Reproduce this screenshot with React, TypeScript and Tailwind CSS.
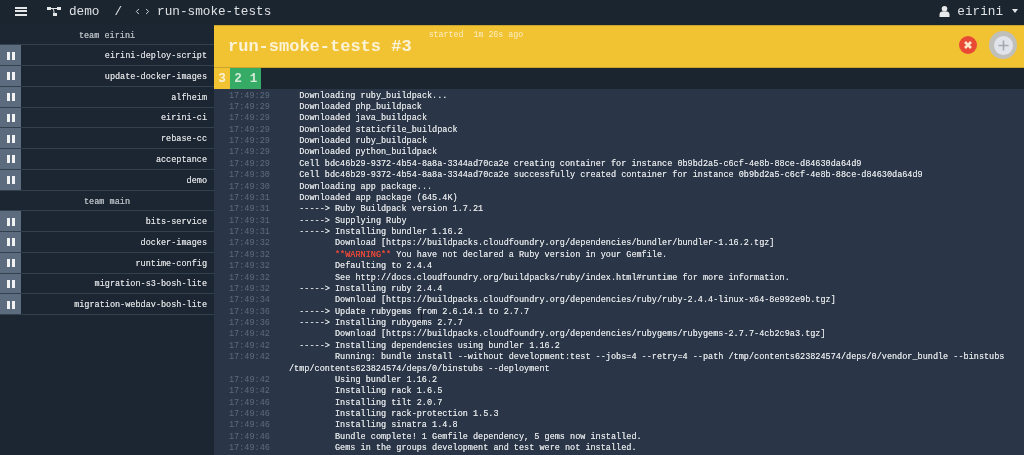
import { ChevronLeft, ChevronRight } from 'lucide-react';

const mono = "font-['Liberation_Mono','Courier_New',monospace]";

const teams = [
  {
    name: 'team eirini',
    jobs: ['eirini-deploy-script', 'update-docker-images', 'alfheim', 'eirini-ci', 'rebase-cc', 'acceptance', 'demo'],
  },
  {
    name: 'team main',
    jobs: ['bits-service', 'docker-images', 'runtime-config', 'migration-s3-bosh-lite', 'migration-webdav-bosh-lite'],
  },
];

const dl = 'https://buildpacks.cloudfoundry.org/dependencies';

const logLines: [string, string][] = [
  ['17:49:29', '  Downloading ruby_buildpack...'],
  ['17:49:29', '  Downloaded php_buildpack'],
  ['17:49:29', '  Downloaded java_buildpack'],
  ['17:49:29', '  Downloaded staticfile_buildpack'],
  ['17:49:29', '  Downloaded ruby_buildpack'],
  ['17:49:29', '  Downloaded python_buildpack'],
  ['17:49:29', '  Cell bdc46b29-9372-4b54-8a8a-3344ad70ca2e creating container for instance 0b9bd2a5-c6cf-4e8b-88ce-d84630da64d9'],
  ['17:49:30', '  Cell bdc46b29-9372-4b54-8a8a-3344ad70ca2e successfully created container for instance 0b9bd2a5-c6cf-4e8b-88ce-d84630da64d9'],
  ['17:49:30', '  Downloading app package...'],
  ['17:49:31', '  Downloaded app package (645.4K)'],
  ['17:49:31', '  -----> Ruby Buildpack version 1.7.21'],
  ['17:49:31', '  -----> Supplying Ruby'],
  ['17:49:31', '  -----> Installing bundler 1.16.2'],
  ['17:49:32', `         Download [${dl}/bundler/bundler-1.16.2.tgz]`],
  ['17:49:32', 'WARNING'],
  ['17:49:32', '         Defaulting to 2.4.4'],
  ['17:49:32', '         See http://docs.cloudfoundry.org/buildpacks/ruby/index.html#runtime for more information.'],
  ['17:49:32', '  -----> Installing ruby 2.4.4'],
  ['17:49:34', `         Download [${dl}/ruby/ruby-2.4.4-linux-x64-8e992e9b.tgz]`],
  ['17:49:36', '  -----> Update rubygems from 2.6.14.1 to 2.7.7'],
  ['17:49:36', '  -----> Installing rubygems 2.7.7'],
  ['17:49:42', `         Download [${dl}/rubygems/rubygems-2.7.7-4cb2c9a3.tgz]`],
  ['17:49:42', '  -----> Installing dependencies using bundler 1.16.2'],
  ['17:49:42', '         Running: bundle install --without development:test --jobs=4 --retry=4 --path /tmp/contents623824574/deps/0/vendor_bundle --binstubs /tmp/contents623824574/deps/0/binstubs --deployment'],
  ['17:49:42', '         Using bundler 1.16.2'],
  ['17:49:42', '         Installing rack 1.6.5'],
  ['17:49:46', '         Installing tilt 2.0.7'],
  ['17:49:46', '         Installing rack-protection 1.5.3'],
  ['17:49:46', '         Installing sinatra 1.4.8'],
  ['17:49:46', '         Bundle complete! 1 Gemfile dependency, 5 gems now installed.'],
  ['17:49:46', '         Gems in the groups development and test were not installed.'],
];

function PauseButton() {
  return (
    <div className="w-[21px] h-full pt-[1px] bg-[#5c6b7d] flex items-center justify-center gap-[2px] shrink-0">
      <div className="w-[3px] h-[8px] bg-[#f2f3f4]" />
      <div className="w-[3px] h-[8px] bg-[#f2f3f4]" />
    </div>
  );
}

function PipelineIcon() {
  return (
    <svg width="14" height="9" viewBox="0 0 14 9" className="text-[#e4e6e8]">
      <rect x="0" y="0" width="4" height="3" fill="currentColor" />
      <rect x="10" y="0" width="4" height="3" fill="currentColor" />
      <rect x="6" y="6" width="4" height="3" fill="currentColor" />
      <path d="M4 1.5h6M5 1.5c1.5 0 2 2 2 4.5" stroke="currentColor" strokeWidth="1" fill="none" />
    </svg>
  );
}

function Sidebar() {
  return (
    <div className={`w-[214px] shrink-0 bg-[#1c2632] text-[8.52px] text-[#d6d8db] [text-shadow:0_0_0.6px_#d6d8db] ${mono}`}>
      {teams.map((team) => (
        <div key={team.name}>
          <div className="h-[20.75px] pt-[4px] flex items-center justify-center border-b border-[#33414f] text-[#aab1b7]">
            {team.name}
          </div>
          {team.jobs.map((job) => (
            <div key={job} className="h-[20.75px] flex items-center border-b border-[#33414f]">
              <PauseButton />
              <span className="ml-auto pr-[7px] pt-[3px]">{job}</span>
            </div>
          ))}
        </div>
      ))}
    </div>
  );
}

export default function App() {
  return (
    <div className={`w-[1024px] h-[455px] overflow-hidden bg-[#1a2530] flex flex-col relative blur-[0.45px] ${mono}`}>
      {/* Top bar */}
      <div className="h-[24.5px] pb-[2px] shrink-0 flex items-center text-[12.7px] text-[#dfe1e3]">
        <div className="ml-[15px] w-[12px] flex flex-col gap-[1.5px]">
          <div className="h-[2px] bg-[#e4e6e8]" />
          <div className="h-[2px] bg-[#e4e6e8]" />
          <div className="h-[2px] bg-[#e4e6e8]" />
        </div>
        <div className="ml-[20px] flex">
          <PipelineIcon />
        </div>
        <span className="ml-[8px]">demo</span>
        <span className="ml-[15px]">/</span>
        <div className="ml-[11px] flex items-center gap-[1px]">
          <ChevronLeft size={9} strokeWidth={2.5} />
          <ChevronRight size={9} strokeWidth={2.5} />
        </div>
        <span className="ml-[5px]">run-smoke-tests</span>
        <div className="ml-auto flex items-center">
          <svg width="11" height="11" viewBox="0 0 11 11" className="text-[#e8e9ea]">
            <circle cx="5.5" cy="2.8" r="2.8" fill="currentColor" />
            <path d="M0.5 11V8.5c0-2 1.5-3 2.5-3h5c1 0 2.5 1 2.5 3V11z" fill="currentColor" />
          </svg>
          <span className="ml-[7px]">eirini</span>
          <div className="ml-[9px] mr-[6px] w-0 h-0 border-x-[3.5px] border-x-transparent border-t-[4px] border-t-[#e4e6e8]" />
        </div>
      </div>

      <div className="flex flex-1 min-h-0">
        <Sidebar />

        <div className="flex-1 min-w-0 flex flex-col">
          {/* Build banner */}
          <div className="h-[43px] shrink-0 bg-[#f1c232] border-y border-[#c9a42e] flex pl-[14px] pr-[7px] text-[#fbf3d7]">
            <span className="text-[17px] font-bold mt-[11px] leading-[20px]">run-smoke-tests #3</span>
            <span className="text-[8.3px] ml-[17px] mt-[3.5px] leading-[12px] text-[#fbeec4] whitespace-pre">
              started  1m 26s ago
            </span>
            <div className="ml-auto flex items-center pb-[2px]">
              <div className="w-[18px] h-[18px] rounded-full bg-[#e84a36] flex items-center justify-center">
                <svg width="10" height="10" viewBox="0 0 10 10">
                  <path d="M2 2l6 6M8 2l-6 6" stroke="#f9e9c8" strokeWidth="2.6" />
                </svg>
              </div>
              <div className="ml-[12px] w-[28px] h-[28px] rounded-full bg-[#bfbfbc] flex items-center justify-center">
                <div className="w-[19px] h-[19px] rounded-full bg-[#e0e3ea] flex items-center justify-center">
                  <svg width="11" height="11" viewBox="0 0 11 11">
                    <path d="M5.5 0.5v10M0.5 5.5h10" stroke="#a5a8ac" strokeWidth="1.6" />
                  </svg>
                </div>
              </div>
            </div>
          </div>

          {/* Build tabs */}
          <div className="h-[21px] shrink-0 flex text-[12.7px] font-bold text-[#d5ead9] leading-[21px]">
            <div className="w-[16px] bg-[#f1c232] text-center text-[#fbf3d7]">3</div>
            <div className="w-[16px] bg-[#35ab66] text-center">2</div>
            <div className="w-[15px] bg-[#35ab66] text-center">1</div>
          </div>

          {/* Build log */}
          <div className="flex-1 min-h-0 overflow-hidden bg-[#2a3647] pt-[2px] text-[8.52px] leading-[11.37px] relative">
            {logLines.map(([time, text], i) => (
              <div key={i} className="flex pl-[15px] pr-[8px]">
                <span className="w-[60px] shrink-0 text-[#5d6b7e]">{time}</span>
                <span className="whitespace-pre-wrap text-[#dcdfe2] min-w-0 [text-shadow:0_0_0.6px_#dcdfe2]">
                  {text === 'WARNING' ? (
                    <>
                      {'         '}
                      <span className="text-[#e8473a] [text-shadow:0_0_0.6px_#e8473a]">**WARNING**</span>
                      {' You have not declared a Ruby version in your Gemfile.'}
                    </>
                  ) : (
                    text
                  )}
                </span>
              </div>
            ))}
            {/* mouse cursor over the log */}
            <div className="absolute left-[207px] top-[224px] w-[1px] h-[9px] bg-[#11161c]" />
          </div>
        </div>
      </div>
    </div>
  );
}
